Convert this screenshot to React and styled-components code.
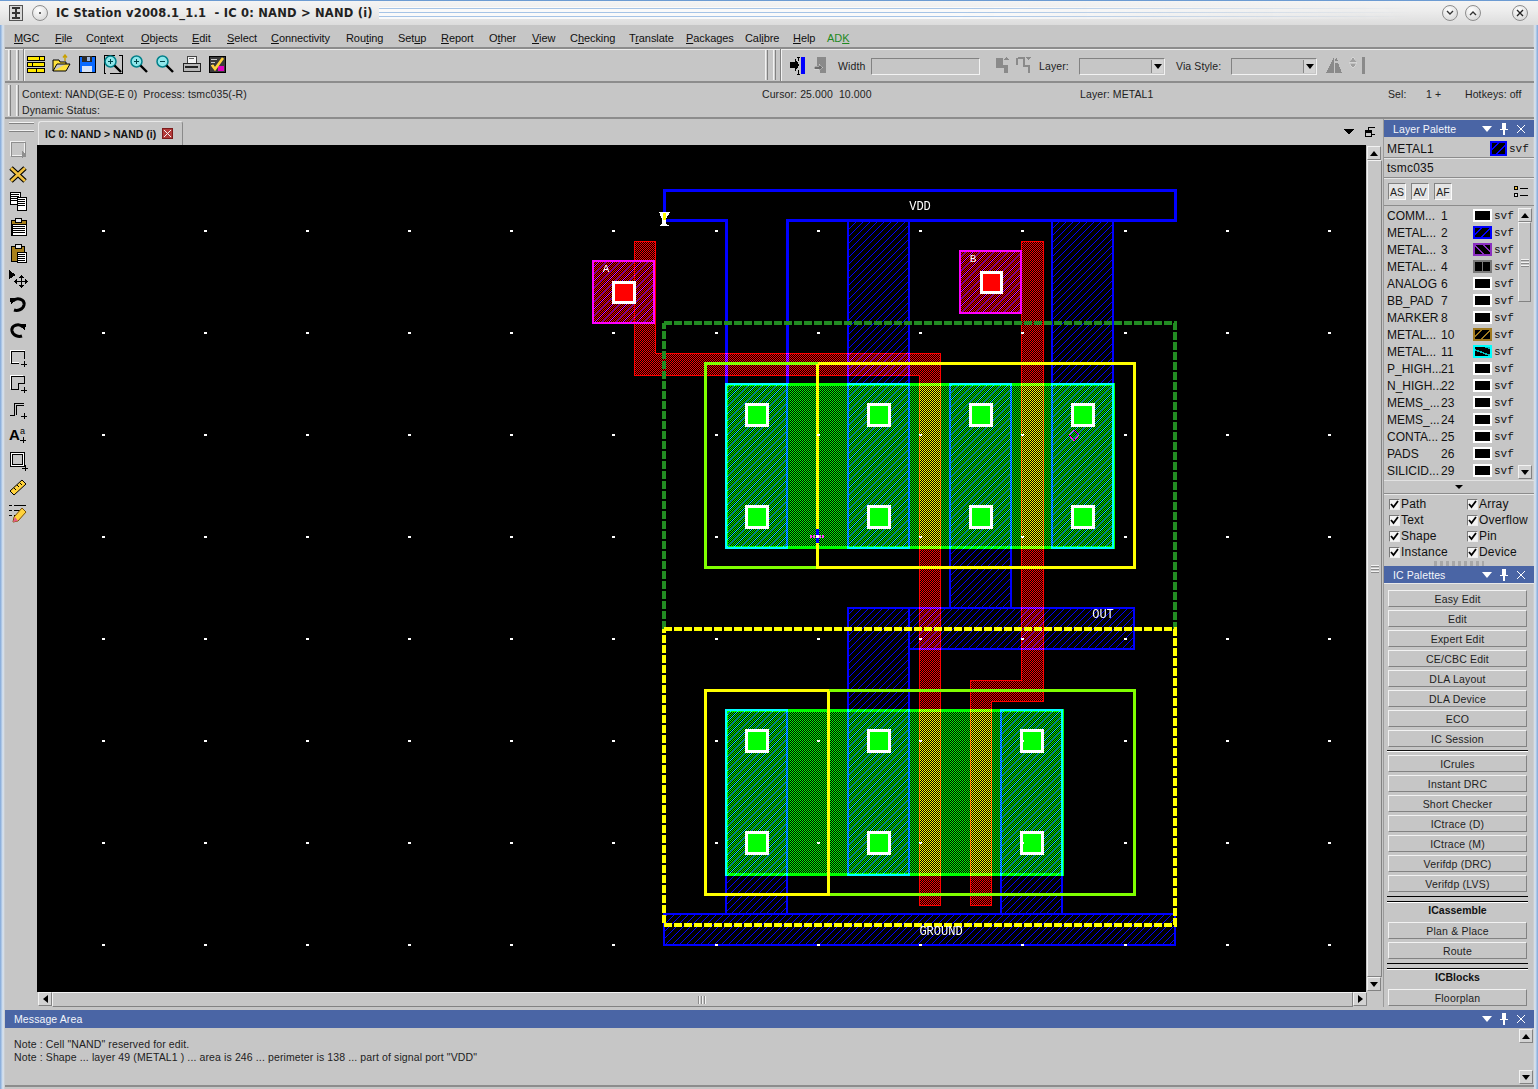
import React from "react";
import styled, { createGlobalStyle } from "styled-components";

const GlobalStyle = createGlobalStyle`
  html, body { margin: 0; padding: 0; background: #c6c6c6; }
  body { width: 1538px; height: 1089px; overflow: hidden; }
`;

const GRAY = "#c6c6c6";
const TITLE_BLUE = "#4a65a5";
const LIGHT = "#f2f2f2";
const DARK = "#828282";
const UI_FONT = `"Liberation Sans", Arial, sans-serif`;

/* ---------- window shell ---------- */

const Window = styled.div`
  width: 1538px;
  height: 1089px;
  box-sizing: border-box;
  background: linear-gradient(90deg, #7ea6d8 0, #dbe6f2 3px, ${GRAY} 5px, ${GRAY} 1533px, #dbe6f2 1535px, #7ea6d8 1538px);
  display: flex;
  flex-direction: column;
  font-family: ${UI_FONT};
  font-size: 11px;
  color: #111;
  overflow: hidden;
`;

const TitleBar = styled.div`
  height: 25px;
  box-sizing: border-box;
  border-top: 1px solid #6c9bd2;
  background: linear-gradient(#f4f4f4, #ededed 40%, #dcdcdc);
  display: flex;
  align-items: center;
  padding: 0 10px 0 9px;
`;

const TitleText = styled.div`
  font-family: "DejaVu Sans", sans-serif;
  font-weight: 700;
  font-size: 11.5px;
  letter-spacing: 0.2px;
  white-space: pre;
  color: #222;
  margin-left: 8px;
`;

const TitleStripes = styled.div`
  flex: 1;
  height: 12px;
  margin: 0 30px 0 6px;
  background: repeating-linear-gradient(#fafafa 0, #fafafa 1px, #a6c4e6 1px, #a6c4e6 2px, #fafafa 2px, #fafafa 4px);
  -webkit-mask-image: linear-gradient(90deg, #000 55%, transparent 100%);
  mask-image: linear-gradient(90deg, #000 55%, transparent 100%);
`;

const WinButton = styled.div`
  width: 16px;
  height: 16px;
  box-sizing: border-box;
  border-radius: 50%;
  border: 1px solid #8d8d8d;
  background: radial-gradient(circle at 40% 30%, #fff, #d0d0d0);
  margin-left: ${(p) => p.$gap || 0}px;
  display: flex;
  align-items: center;
  justify-content: center;
`;

const Glyph = styled.svg`
  display: block;
  flex: none;
  shape-rendering: crispEdges;
  margin-left: ${(p) => p.$ml || 0};
`;

const MenuBar = styled.div`
  height: 24px;
  box-sizing: border-box;
  margin: 0 4px 0 5px;
  padding: 3px 0 0 9px;
  display: flex;
  align-items: center;
  border-bottom: 2px solid #8c8c8c;
  box-shadow: 0 1px 0 #ececec;
`;

const MenuItem = styled.div`
  width: ${(p) => p.$w}px;
  flex: none;
  white-space: pre;
  color: ${(p) => (p.$green ? "#1f8a1f" : "#111")};
  letter-spacing: -0.08px;
`;

const ToolBar = styled.div`
  height: 34px;
  box-sizing: border-box;
  margin: 0 4px 0 5px;
  display: flex;
  align-items: center;
  border-bottom: 2px solid #8c8c8c;
`;

const Grip = styled.div`
  width: 12px;
  height: ${(p) => p.$h}px;
  flex: none;
  margin-left: ${(p) => p.$ml ?? 3}px;
  background: linear-gradient(90deg, ${LIGHT} 0 1px, #d0d0d0 1px 2px, ${DARK} 2px 3px, ${GRAY} 3px 8px, ${LIGHT} 8px 9px, #d0d0d0 9px 10px, ${DARK} 10px 11px, ${GRAY} 11px);
`;

const ToolDivider = styled.div`
  width: 2px;
  height: 100%;
  flex: none;
  margin: 0 ${(p) => p.$right || 0}px 0 3px;
  background: linear-gradient(90deg, ${DARK} 0 1px, ${LIGHT} 1px);
`;

const IconStrip = styled.div`
  width: ${(p) => p.$w}px;
  flex: none;
  display: flex;
  align-items: center;
  gap: 6px;
  margin-top: -3px;
`;

const ToolGap = styled.div`
  width: ${(p) => p.$w}px;
  flex: none;
`;

const SmallLabel = styled.div`
  flex: none;
  width: ${(p) => p.$w}px;
  margin-top: 2px;
  white-space: nowrap;
  font-size: 10.5px;
  color: #222;
  letter-spacing: 0.1px;
`;

const Field = styled.div`
  flex: none;
  box-sizing: border-box;
  width: ${(p) => p.$w}px;
  height: 17px;
  margin: 2px ${(p) => p.$mr || 0}px 0 0;
  border: 1px solid;
  border-color: ${DARK} ${LIGHT} ${LIGHT} ${DARK};
  position: relative;
  background: ${GRAY};
`;

const ComboArrow = styled.div`
  position: absolute;
  right: 1px;
  top: 1px;
  bottom: 1px;
  width: 11px;
  background: #d4d4d4;
  border-left: 1px solid #888;
  display: flex;
  align-items: center;
  justify-content: center;
  &::after {
    content: "";
    border: 4px solid transparent;
    border-top: 5px solid #000;
    border-bottom: 0;
  }
`;

const StatusBar = styled.div`
  height: 36px;
  box-sizing: border-box;
  margin: 0 4px 0 5px;
  display: flex;
  align-items: center;
  border-bottom: 2px solid #8c8c8c;
`;

const StatusLines = styled.div`
  flex: 1;
  margin: 4px 0 0 2px;
  display: grid;
  grid-template-columns: 740px 318px 308px 38px 39px 1fr;
  grid-auto-rows: 16px;
  align-items: center;
  color: #222;
  font-size: 10.5px;
  letter-spacing: 0.1px;
  white-space: pre;
`;

/* ---------- main row ---------- */

const MainRow = styled.div`
  height: 888px;
  flex: none;
  margin: 0 4px 0 5px;
  display: flex;
`;

const LeftTools = styled.div`
  width: 32px;
  flex: none;
  display: flex;
  flex-direction: column;
  align-items: center;
`;

const LeftGrip = styled.div`
  width: 25px;
  height: 11px;
  margin: 3px 0 6px;
  flex: none;
  background: linear-gradient(${LIGHT} 0 1px, ${DARK} 1px 2px, ${GRAY} 2px 8px, ${LIGHT} 8px 9px, ${DARK} 9px 10px, ${GRAY} 10px);
`;

const LeftIcons = styled.div`
  display: flex;
  flex-direction: column;
  gap: 6px;
  margin-left: -7px;
`;

const Center = styled.div`
  width: 1347px;
  flex: none;
  display: flex;
  flex-direction: column;
  border-right: 1px solid #9a9a9a;
  box-sizing: border-box;
`;

const TabRow = styled.div`
  height: 26px;
  flex: none;
  display: flex;
  align-items: flex-end;
  padding-left: 1px;
`;

const Tab = styled.div`
  height: 24px;
  width: 145px;
  box-sizing: border-box;
  border: 1px solid #e8e8e8;
  border-right-color: #8a8a8a;
  border-bottom: 0;
  border-radius: 3px 3px 0 0;
  display: flex;
  align-items: center;
  padding-left: 6px;
  gap: 6px;
  font-weight: 700;
  font-size: 10.5px;
  white-space: nowrap;
`;

const TabClose = styled.div`
  width: 11px;
  height: 11px;
  background: #b23a3a;
  border: 1px solid #7b1b1b;
  box-sizing: border-box;
  display: flex;
  align-items: center;
  justify-content: center;
`;

const TabTools = styled.div`
  margin-left: auto;
  height: 100%;
  display: flex;
  align-items: center;
  gap: 11px;
  padding: 2px 8px 0 0;
`;

const CanvasRow = styled.div`
  display: flex;
  height: 847px;
  flex: none;
`;

const VScroll = styled.div`
  width: ${(p) => p.$w || 16}px;
  flex: none;
  box-sizing: border-box;
  padding: 1px;
  display: flex;
  flex-direction: column;
`;

const HScrollRow = styled.div`
  height: 15px;
  flex: none;
  display: flex;
  padding: 0 16px 0 1px;
`;

const ScrollButton = styled.div`
  flex: none;
  width: 14px;
  height: 14px;
  box-sizing: border-box;
  border: 1px solid;
  border-color: ${LIGHT} ${DARK} ${DARK} ${LIGHT};
  background: #d2d2d2;
  display: flex;
  align-items: center;
  justify-content: center;
  &::after {
    content: "";
    width: 0;
    height: 0;
    border: 4px solid transparent;
    ${(p) => p.$dir === "up" && "border-bottom: 5px solid #000; border-top: 0;"}
    ${(p) => p.$dir === "down" && "border-top: 5px solid #000; border-bottom: 0;"}
    ${(p) => p.$dir === "left" && "border-right: 5px solid #000; border-left: 0;"}
    ${(p) => p.$dir === "right" && "border-left: 5px solid #000; border-right: 0;"}
  }
`;

const ScrollThumb = styled.div`
  box-sizing: border-box;
  flex: ${(p) => (p.$h ? "none" : 1)};
  height: ${(p) => (p.$h ? `${p.$h}px` : "auto")};
  border: 1px solid;
  border-color: ${LIGHT} ${DARK} ${DARK} ${LIGHT};
  display: flex;
  align-items: center;
  justify-content: center;
`;

const ThumbLines = styled.div`
  width: ${(p) => (p.$vertical ? 8 : 9)}px;
  height: ${(p) => (p.$vertical ? 9 : 8)}px;
  background: repeating-linear-gradient(
    ${(p) => (p.$vertical ? "0deg" : "90deg")},
    #8a8a8a 0 1px,
    ${LIGHT} 1px 2px,
    ${GRAY} 2px 3px
  );
`;

const ScrollSpace = styled.div`
  flex: 1;
`;

/* ---------- dock ---------- */

const Dock = styled.div`
  width: 150px;
  flex: none;
  display: flex;
  flex-direction: column;
`;

const PanelHeader = styled.div`
  height: ${(p) => p.$h || 17}px;
  margin-top: ${(p) => p.$mt || 0}px;
  flex: none;
  background: ${TITLE_BLUE};
  color: #f4f6fb;
  font-size: 10.5px;
  letter-spacing: 0.1px;
  display: flex;
  align-items: center;
  padding: 0 8px 0 9px;
`;

const HeaderTools = styled.div`
  margin-left: auto;
  display: flex;
  align-items: center;
  gap: 7px;
`;

const InfoRow = styled.div`
  height: ${(p) => p.$h}px;
  flex: none;
  box-sizing: border-box;
  display: flex;
  align-items: center;
  padding: ${(p) => p.$pt || 0}px 3px 0;
  font-size: 12px;
  letter-spacing: 0.2px;
  border-bottom: 1px solid #8c8c8c;
  box-shadow: 0 1px 0 #e6e6e6;
`;

const Svf = styled.span`
  font-family: "Liberation Mono", monospace;
  font-size: 11px;
  margin-left: 2px;
  width: 20px;
  flex: none;
  letter-spacing: 0;
`;

const Swatch = styled.div`
  width: ${(p) => p.$w || 19}px;
  height: ${(p) => p.$h || 13}px;
  flex: none;
  box-sizing: border-box;
  border: 2px solid ${(p) => p.$color || "#fff"};
  background-color: #000;
  background-image: ${(p) =>
    p.$line
      ? `repeating-linear-gradient(${p.$angle ?? -45}deg, transparent 0 5px, ${p.$line} 5px 6.5px)`
      : p.$split
      ? `linear-gradient(90deg, transparent 0 7px, ${p.$color} 7px 8px, transparent 8px)`
      : "none"};
  margin-left: ${(p) => p.$ml || 0}px;
`;

const ShortButton = styled.div`
  width: 18px;
  height: 17px;
  box-sizing: border-box;
  border: 1px solid;
  border-color: ${DARK} #fafafa #fafafa ${DARK};
  background: #e4e4e4;
  font-size: 10.5px;
  color: #222;
  display: flex;
  align-items: center;
  justify-content: center;
`;

const ButtonsRow = styled.div`
  height: 28px;
  flex: none;
  box-sizing: border-box;
  display: flex;
  align-items: center;
  gap: 5px;
  padding: 0 4px 0 4px;
  border-bottom: 1px solid #8c8c8c;
`;

const LayerSection = styled.div`
  height: 274px;
  flex: none;
  display: flex;
  padding-top: 1px;
  box-sizing: border-box;
`;

const LayerList = styled.div`
  width: 133px;
  flex: none;
`;

const LayerRow = styled.div`
  height: 17px;
  display: flex;
  align-items: center;
  padding-left: 3px;
  font-size: 12px;
  white-space: nowrap;
`;

const LayerName = styled.span`
  width: 54px;
  flex: none;
  letter-spacing: 0;
`;

const LayerNum = styled.span`
  width: 32px;
  flex: none;
`;

const MoreRow = styled.div`
  height: 12px;
  flex: none;
  border-top: 1px solid #e2e2e2;
  border-bottom: 1px solid #8c8c8c;
  display: flex;
  justify-content: center;
  align-items: center;
  &::after {
    content: "";
    border: 4px solid transparent;
    border-top: 4px solid #000;
    border-bottom: 0;
  }
`;

const CheckGrid = styled.div`
  height: 67px;
  flex: none;
  box-sizing: border-box;
  display: grid;
  grid-template-columns: 78px 1fr;
  grid-auto-rows: 16px;
  align-items: center;
  padding: 1px 0 0 5px;
  border-top: 1px solid #e8e8e8;
`;

const CheckItem = styled.div`
  display: flex;
  align-items: center;
  font-size: 12px;
  letter-spacing: 0.2px;
  white-space: nowrap;
`;

const CheckBox = styled.div`
  width: 9px;
  height: 9px;
  margin-right: 1px;
  box-sizing: content-box;
  background: #f4f4f4;
  border: 1px solid;
  border-color: #7a7a7a #eee #eee #7a7a7a;
  display: flex;
  align-items: center;
  justify-content: center;
`;

const DockGrip = styled.div`
  height: 5px;
  flex: none;
  margin: 0 50px;
  background: repeating-linear-gradient(90deg, #9a9a9a 0 3px, ${GRAY} 3px 6px);
  opacity: 0.7;
`;

const ButtonPanel = styled.div`
  flex: 1;
  min-height: 0;
  overflow: hidden;
  display: flex;
  flex-direction: column;
  padding: 6px 7px 0 4px;
  border-top: 1px solid #e8e8e8;
`;

const PaletteButton = styled.div`
  height: 17px;
  flex: none;
  margin-bottom: 3px;
  box-sizing: border-box;
  border: 1px solid;
  border-color: ${LIGHT} ${DARK} ${DARK} ${LIGHT};
  display: flex;
  align-items: center;
  justify-content: center;
  font-size: 10.5px;
  letter-spacing: 0.2px;
  color: #222;
`;

const ThinRule = styled.div`
  height: 2px;
  flex: none;
  margin: 0 -1px 3px;
  background: linear-gradient(#111 0 1px, #fff 1px);
`;

const DoubleRule = styled.div`
  height: 7px;
  flex: none;
  margin: 1px -1px 0;
  background: linear-gradient(#000 0 1px, ${GRAY} 1px 5px, #000 5px 6px, #fff 6px);
`;

const PaletteGroup = styled.div`
  height: 14px;
  flex: none;
  font-weight: 700;
  font-size: 10.5px;
  text-align: center;
  line-height: 14px;
  margin-bottom: 5px;
`;

/* ---------- message area ---------- */

const MessageArea = styled.div`
  height: 75px;
  margin: 3px 4px 0 5px;
  flex: none;
  display: flex;
  flex-direction: column;
  border-bottom: 2px solid #8c8c8c;
`;

const MessageBody = styled.div`
  flex: 1;
  display: flex;
  min-height: 0;
`;

const MessageText = styled.div`
  flex: 1;
  padding: 10px 0 0 9px;
  font-size: 10.5px;
  line-height: 13px;
  letter-spacing: 0.12px;
  color: #222;
  white-space: pre;
`;

/* ---------- layout canvas ---------- */

const CanvasSvg = styled.svg`
  display: block;
  flex: none;
  width: 1329px;
  height: 847px;
  background: #000;
  isolation: isolate;
  shape-rendering: crispEdges;
`;

const ScreenLayer = styled.g`
  mix-blend-mode: screen;
`;

const MetalRect = styled.rect`
  fill: url(#hatchBlue);
  stroke: #0000ff;
  stroke-width: 2;
`;

const MetalLine = styled.path`
  fill: none;
  stroke: #0000ff;
  stroke-width: 3;
`;

const PolyShape = styled.path`
  fill: url(#ditherRed);
  stroke: #ff0000;
  stroke-width: 1;
`;

const ActiveRect = styled.rect`
  fill: url(#ditherGreen);
  stroke: #00ff00;
  stroke-width: 3;
`;

const BoxLine = styled.path`
  fill: none;
  stroke: ${(p) => p.$color};
  stroke-width: 3;
`;

const DashedBox = styled.path`
  fill: none;
  stroke: ${(p) => p.$color};
  stroke-width: 4;
  stroke-dasharray: 8 2;
`;

const ContactRect = styled.rect`
  fill: ${(p) => p.$fill};
  stroke: #fff;
  stroke-width: 3;
`;

const CellLabel = styled.text`
  font-family: "Liberation Mono", monospace;
  font-size: ${(p) => p.$size || 12}px;
  fill: #fff;
  text-anchor: middle;
  shape-rendering: auto;
`;

const GRID_X = [103, 205, 307, 409, 511, 613, 716, 818, 920, 1022, 1125, 1227, 1329];
const GRID_Y = [231, 333, 435, 537, 639, 741, 843, 945];

const METAL_RECTS = [
  [848, 221, 61, 163],
  [1052, 221, 61, 163],
  [726, 384, 61, 164],
  [848, 384, 61, 164],
  [950, 384, 61, 224],
  [1052, 384, 61, 164],
  [909, 608, 225, 41],
  [848, 608, 61, 267],
  [726, 710, 61, 204],
  [1001, 710, 61, 204],
  [664, 914, 511, 31],
  [593, 261, 61, 62],
  [960, 251, 61, 62],
];

const UPPER_CONTACTS = [757, 879, 981, 1083].flatMap((x) => [415, 517].map((y) => [x, y]));
const LOWER_CONTACTS = [757, 879, 1032].flatMap((x) => [741, 843].map((y) => [x, y]));

/* 8x8 checkerboard tile, one pixel squares */
const CHECKER = Array.from({ length: 64 }, (_, i) => [i % 8, Math.floor(i / 8)])
  .filter(([x, y]) => (x + y) % 2 === 0)
  .map(([x, y]) => `M${x} ${y}h1v1h-1z`)
  .join("");

function LayoutCanvas() {
  return (
    <CanvasSvg viewBox="37 145 1329 847">
      <defs>
        <pattern id="hatchBlue" patternUnits="userSpaceOnUse" width="7" height="7">
          {[0, 1, 2, 3, 4, 5, 6].map((i) => (
            <rect key={i} x={i} y={6 - i} width="1" height="1" fill="#0000ff" />
          ))}
        </pattern>
        <pattern id="ditherRed" patternUnits="userSpaceOnUse" width="8" height="8">
          <path d={CHECKER} fill="#ff0000" />
        </pattern>
        <pattern id="ditherGreen" patternUnits="userSpaceOnUse" width="8" height="8">
          <path d={CHECKER} fill="#00ff00" />
        </pattern>
      </defs>

      <ScreenLayer>
        <MetalLine d="M664.5 221.5V190.5H1175.5V220.5H787.5V384" />
        <MetalLine d="M664.5 220.5H726.5V384" />
        {METAL_RECTS.map(([x, y, w, h]) => (
          <MetalRect key={`${x}-${y}`} x={x} y={y} width={w} height={h} />
        ))}
      </ScreenLayer>

      <ScreenLayer>
        <PolyShape d="M634.5 241.5H655.5V353.5H940.5V905.5H919.5V375.5H634.5Z" />
        <PolyShape d="M1021.5 241.5H1043.5V701.5H991.5V905.5H970.5V680.5H1021.5Z" />
        <rect x="592" y="260" width="63" height="64" fill="url(#ditherRed)" />
        <rect x="959" y="250" width="62" height="64" fill="url(#ditherRed)" />
        <rect x="593" y="261" width="61" height="62" fill="none" stroke="#ff0000" strokeWidth="2" />
        <rect x="960" y="251" width="61" height="62" fill="none" stroke="#ff0000" strokeWidth="2" />
      </ScreenLayer>

      <ScreenLayer>
        <ActiveRect x="726.5" y="384.5" width="387" height="163" />
        <ActiveRect x="726.5" y="710.5" width="336" height="164" />
      </ScreenLayer>

      <BoxLine $color="#80ff00" d="M817.5 363.5H705.5V567.5H817.5" />
      <BoxLine $color="#ffff00" d="M817.5 363.5H1134.5V567.5H817.5V363.5" />
      <BoxLine $color="#80ff00" d="M828.5 690.5H1134.5V894.5H828.5" />
      <BoxLine $color="#ffff00" d="M828.5 690.5H705.5V894.5H828.5V690.5" />

      <DashedBox $color="#228b22" d="M664 323H1175V629M664 629V323" />
      <DashedBox $color="#ffff00" d="M664 629H1175V925H664V629" />

      <ContactRect $fill="#ff0000" x="613.5" y="282.5" width="21" height="20" />
      <ContactRect $fill="#ff0000" x="981.5" y="272.5" width="20" height="20" />
      {UPPER_CONTACTS.concat(LOWER_CONTACTS).map(([x, y]) => (
        <ContactRect key={`${x}-${y}`} $fill="#00ff00" x={x - 10.5} y={y - 10.5} width="21" height="21" />
      ))}

      {GRID_Y.flatMap((y) =>
        GRID_X.map((x) => <rect key={`${x}:${y}`} x={x - 1} y={y - 1} width="3" height="2" fill="#fff" />)
      )}

      <polygon points="1074,430 1079,435 1074,441 1069,435" fill="none" stroke="#ff00ff" />
      <rect x="816" y="529" width="3" height="14" fill="#0000ff" />
      <path d="M810 536.5H825" stroke="#ff40ff" strokeWidth="3" strokeDasharray="2 1" />
      <rect x="816" y="535" width="3" height="3" fill="#fff" />
      <path d="M659 212H670L666 219V224L670 226H659L662 224V219Z" fill="#fff" />
      <rect x="663" y="213" width="3" height="7" fill="#ffff00" />

      <CellLabel x="920" y="210">VDD</CellLabel>
      <CellLabel x="1103" y="618">OUT</CellLabel>
      <CellLabel x="941" y="935">GROUND</CellLabel>
      <CellLabel $size={11} x="606" y="272">A</CellLabel>
      <CellLabel $size={11} x="973" y="262">B</CellLabel>
    </CanvasSvg>
  );
}

/* ---------- toolbar icons ---------- */

const I = ({ w = 20, h = 20, children }) => (
  <Glyph width={w} height={h} viewBox={`0 0 ${w} ${h}`}>
    {children}
  </Glyph>
);

const Magnifier = ({ sign }) => (
  <I>
    <circle cx="7.5" cy="7.5" r="5.5" fill="#8fe6ea" stroke="#00808a" strokeWidth="1.5" shapeRendering="auto" />
    <path d="M11.5 11.5L18 18" stroke="#000" strokeWidth="2.4" shapeRendering="auto" />
    <rect x="5" y="7" width="5" height="1.4" fill="#00464a" />
    {sign === "+" && <rect x="6.8" y="5" width="1.4" height="5" fill="#00464a" />}
  </I>
);

const TOP_ICONS = [
  <I key="layers">
    <rect x="2" y="2" width="17" height="4" fill="#ffe800" stroke="#000" />
    <rect x="2" y="8" width="17" height="4" fill="#ffe800" stroke="#000" />
    <rect x="2" y="14" width="17" height="4" fill="#ffe800" stroke="#000" />
    <path d="M14 2V6M7 8V12M11 14V18" stroke="#000" />
  </I>,
  <I key="open">
    <path d="M2 17V6H8L9 8H15V10H6L2 17H15L19 10H15" fill="#ffe23c" stroke="#000" shapeRendering="auto" />
    <path d="M14 7V2M12 3.5L14 1L16 3.5" fill="none" stroke="#c8a000" strokeWidth="1.4" shapeRendering="auto" />
  </I>,
  <I key="save">
    <rect x="2" y="2" width="16" height="16" fill="#0a6aff" stroke="#000" />
    <rect x="5" y="2" width="10" height="6" fill="#2a2a2a" />
    <rect x="10" y="3" width="3" height="4" fill="#9fb8e0" />
    <rect x="5" y="12" width="10" height="6" fill="#d8e4f8" />
  </I>,
  <I key="fit">
    <path d="M1 1H19V19H1Z" fill="none" stroke="#000" />
    <rect x="3" y="12" width="4" height="8" fill={GRAY} />
    <rect x="12" y="0" width="4" height="8" fill={GRAY} />
    <circle cx="7.5" cy="7.5" r="5.5" fill="#8fe6ea" stroke="#00808a" strokeWidth="1.5" shapeRendering="auto" />
    <path d="M11.5 11.5L18 18" stroke="#000" strokeWidth="2.4" shapeRendering="auto" />
    <path d="M5 7.5H10M7.5 5V10" stroke="#00464a" />
  </I>,
  <Magnifier key="in" sign="+" />,
  <Magnifier key="out" sign="-" />,
  <I key="print">
    <rect x="6" y="2" width="9" height="7" fill="#f4f4f4" stroke="#444" />
    <rect x="2" y="9" width="17" height="8" fill="#b8b8b8" stroke="#222" />
    <rect x="4" y="12" width="13" height="2" fill="#222" />
    <rect x="8" y="4" width="5" height="1" fill="#666" />
  </I>,
  <I key="check">
    <rect x="2" y="2" width="16" height="16" fill="#3a3a3a" stroke="#000" />
    <path d="M4 5H10M4 8H8M4 11H7" stroke="#c8c8c8" />
    <rect x="11" y="12" width="6" height="5" fill="#e000c0" />
    <path d="M5 11L8 15L16 4" fill="none" stroke="#ffd23c" strokeWidth="2.6" shapeRendering="auto" />
  </I>,
];

const PlusMark = ({ x = 13, y = 14 }) => <path d={`M${x} ${y + 3}H${x + 6}M${x + 3} ${y}V${y + 6}`} stroke="#000" />;

const Doc = ({ x, y, w = 9, h = 11 }) => (
  <g>
    <rect x={x} y={y} width={w} height={h} fill="#fff" stroke="#000" />
    {[2, 4, 6, 8].map((d) => (
      <path key={d} d={`M${x + 1} ${y + d}H${x + w - 1}`} stroke="#000" />
    ))}
  </g>
);

const LEFT_ICONS = [
  <I key="sel">
    <rect x="2" y="2" width="14" height="14" fill="none" stroke="#f0f0f0" />
    <rect x="3" y="3" width="14" height="14" fill="none" stroke="#8e8e8e" />
    <path d="M14 12L19 16L14 19Z" fill="#8e8e8e" />
  </I>,
  <I key="del">
    <path d="M3 3L17 16M17 3L3 16" stroke="#000" strokeWidth="5" shapeRendering="auto" />
    <path d="M3 3L17 16M17 3L3 16" stroke="#f0c040" strokeWidth="2.6" shapeRendering="auto" />
  </I>,
  <I key="copy">
    <Doc x={2} y={1} w={10} h={12} />
    <Doc x={9} y={6} w={9} h={13} />
  </I>,
  <I key="clip">
    <rect x="3" y="3" width="15" height="15" fill="#a8801c" stroke="#000" />
    <rect x="7" y="1" width="6" height="4" fill="#e8e8e8" stroke="#000" />
    <Doc x={4} y={7} w={14} h={11} />
  </I>,
  <I key="paste">
    <rect x="3" y="3" width="13" height="15" fill="#a8801c" stroke="#000" />
    <rect x="7" y="1" width="6" height="4" fill="#e8e8e8" stroke="#000" />
    <Doc x={9} y={9} w={9} h={10} />
  </I>,
  <I key="move">
    <path d="M1 1L8 6L1 10Z" fill="#000" />
    <path d="M13 6L10 9H16ZM13 19L10 16H16ZM6 12.5L9 10V15ZM20 12.5L17 10V15Z" fill="#000" />
    <path d="M9 12.5H17M13 9V16" stroke="#000" />
  </I>,
  <I key="undo">
    <path d="M5 6C9 2 17 4 16 10C15 15 9 16 6 15" fill="none" stroke="#000" strokeWidth="3" shapeRendering="auto" />
    <path d="M2 3L9 3L3 10Z" fill="#000" />
  </I>,
  <I key="redo">
    <path d="M15 6C11 2 3 4 4 10C5 15 11 16 14 15" fill="none" stroke="#000" strokeWidth="3" shapeRendering="auto" />
    <path d="M18 3L11 3L17 10Z" fill="#000" />
  </I>,
  <I key="rect">
    <rect x="2" y="3" width="14" height="12" fill="none" stroke="#fff" />
    <rect x="3" y="4" width="13" height="12" fill="none" stroke="#000" />
    <rect x="11" y="12" width="9" height="8" fill={GRAY} />
    <PlusMark />
  </I>,
  <I key="poly">
    <path d="M3 16V3H16V10H10V16Z" fill="none" stroke="#000" />
    <path d="M2 16V2H15" fill="none" stroke="#fff" />
    <PlusMark />
  </I>,
  <I key="path">
    <path d="M2 16H6V4H16M8 16V6H16" fill="none" stroke="#000" />
    <PlusMark />
  </I>,
  <I key="text">
    <text x="1" y="15" fontFamily="Liberation Sans" fontWeight="700" fontSize="15" fill="#000">A</text>
    <text x="12" y="9" fontFamily="Liberation Sans" fontSize="9" fill="#000">a</text>
    <PlusMark x={12} y={12} />
  </I>,
  <I key="inst">
    <rect x="2" y="1" width="14" height="14" fill="#fff" stroke="#000" />
    <rect x="4" y="3" width="10" height="10" fill={GRAY} stroke="#000" />
    <PlusMark x={14} y={14} />
  </I>,
  <I key="ruler">
    <path d="M2 14L14 3L18 7L6 18Z" fill="#ffd23c" stroke="#000" shapeRendering="auto" />
    <path d="M6 11L8 13M9 8L11 10M12 6L14 8" stroke="#000" shapeRendering="auto" />
  </I>,
  <I key="props">
    <path d="M1 2H4M1 7H4M1 12H4M6 2H18M6 7H12M6 12H9" stroke="#000" />
    <path d="M6 14L14 5L18 9L10 18L5 19Z" fill="#ffd23c" stroke="#7a5000" shapeRendering="auto" />
    <path d="M5 19L7 14L10 18Z" fill="#e85a8a" shapeRendering="auto" />
  </I>,
];

const HeaderIcons = () => (
  <HeaderTools>
    <Glyph width="10" height="8" viewBox="0 0 10 8">
      <path d="M0 1H10L5 7Z" fill="#fff" shapeRendering="auto" />
    </Glyph>
    <Glyph width="10" height="12" viewBox="0 0 10 12">
      <path d="M3 0H7V6H9V7H6V12H4V7H1V6H3Z" fill="#fff" />
    </Glyph>
    <Glyph width="10" height="10" viewBox="0 0 10 10">
      <path d="M1 1L9 9M9 1L1 9" stroke="#fff" shapeRendering="auto" />
    </Glyph>
  </HeaderTools>
);

/* ---------- data ---------- */

const MENU = [
  ["", "M", "GC", 41],
  ["", "F", "ile", 31],
  ["Co", "n", "text", 55],
  ["", "O", "bjects", 51],
  ["", "E", "dit", 35],
  ["", "S", "elect", 44],
  ["", "C", "onnectivity", 75],
  ["Rou", "t", "ing", 52],
  ["Set", "u", "p", 43],
  ["", "R", "eport", 48],
  ["O", "t", "her", 43],
  ["", "V", "iew", 38],
  ["C", "h", "ecking", 59],
  ["T", "r", "anslate", 57],
  ["", "P", "ackages", 59],
  ["Cal", "i", "bre", 48],
  ["", "H", "elp", 34],
];

const LAYERS = [
  { name: "COMM...", num: "1" },
  { name: "METAL...", num: "2", color: "#0000ff", line: "#0000ff" },
  { name: "METAL...", num: "3", color: "#8a2fc0", line: "#8a2fc0", angle: 45 },
  { name: "METAL...", num: "4", color: "#7a7a7a", split: true },
  { name: "ANALOG", num: "6" },
  { name: "BB_PAD", num: "7" },
  { name: "MARKER", num: "8" },
  { name: "METAL...", num: "10", color: "#a07a20", line: "#a07a20" },
  { name: "METAL...", num: "11", color: "#00ffff", line: "#00c0c0", angle: 20 },
  { name: "P_HIGH...", num: "21" },
  { name: "N_HIGH...", num: "22" },
  { name: "MEMS_...", num: "23" },
  { name: "MEMS_...", num: "24" },
  { name: "CONTA...", num: "25" },
  { name: "PADS", num: "26" },
  { name: "SILICID...", num: "29" },
];

const CHECKS = ["Path", "Array", "Text", "Overflow", "Shape", "Pin", "Instance", "Device"];

const EDIT_BUTTONS = ["Easy Edit", "Edit", "Expert Edit", "CE/CBC Edit", "DLA Layout", "DLA Device", "ECO", "IC Session"];
const CHECK_BUTTONS = ["ICrules", "Instant DRC", "Short Checker", "ICtrace (D)", "ICtrace (M)", "Verifdp (DRC)", "Verifdp (LVS)"];

export default function App() {
  return (
    <Window>
      <GlobalStyle />

      <TitleBar>
        <Glyph width="14" height="16" viewBox="0 0 14 16">
          <rect x="0.5" y="0.5" width="13" height="15" fill="#d8d8d8" stroke="#555" />
          <path d="M3 3H11M7 3V13M3 8H11M3 13H11" stroke="#333" strokeWidth="2" />
        </Glyph>
        <WinButton $gap={9}>
          <Glyph width="2" height="2"><rect width="2" height="2" fill="#666" /></Glyph>
        </WinButton>
        <TitleText>IC Station v2008.1_1.1  - IC 0: NAND &gt; NAND (i)</TitleText>
        <TitleStripes />
        <WinButton>
          <Glyph width="8" height="6" viewBox="0 0 8 6"><path d="M1 1L4 4L7 1" fill="none" stroke="#333" strokeWidth="1.4" shapeRendering="auto" /></Glyph>
        </WinButton>
        <WinButton $gap={7}>
          <Glyph width="8" height="6" viewBox="0 0 8 6"><path d="M1 5L4 2L7 5" fill="none" stroke="#333" strokeWidth="1.4" shapeRendering="auto" /></Glyph>
        </WinButton>
        <WinButton $gap={31}>
          <Glyph width="8" height="8" viewBox="0 0 8 8"><path d="M1 1L7 7M7 1L1 7" stroke="#222" strokeWidth="1.4" shapeRendering="auto" /></Glyph>
        </WinButton>
      </TitleBar>

      <MenuBar>
        {MENU.map(([before, key, after, w]) => (
          <MenuItem key={before + key + after} $w={w}>
            {before}<u>{key}</u>{after}
          </MenuItem>
        ))}
        <MenuItem $w={30} $green>AD<u>K</u></MenuItem>
      </MenuBar>

      <ToolBar>
        <Grip $h={30} />
        <ToolDivider />
        <IconStrip $w={214}>{TOP_ICONS}</IconStrip>
        <ToolGap $w={526} />
        <Grip $h={30} $ml={0} />
        <ToolDivider $right={8} />
        <I w={17} h={20}>
          <path d="M0 7H5V3L9 10L5 17V13H0Z" fill="#000" />
          <rect x="11" y="2" width="4" height="17" fill="#0000ff" />
          <path d="M7 2H10M7 19H10M8 2V6M8 15V19" stroke="#000" />
        </I>
        <ToolGap $w={6} />
        <I w={14} h={20}>
          <path d="M4 2H13V18H7V11H4Z" fill="#8a8a8a" />
          <path d="M1 11H6V9L10 12.5L6 16V14H1Z" fill="#6e6e6e" stroke="#ddd" strokeWidth="0.5" />
        </I>
        <ToolGap $w={11} />
        <SmallLabel $w={33}>Width</SmallLabel>
        <Field $w={109} $mr={14} />
        <I w={16} h={20}>
          <path d="M2 3H9V10H14V18H10V13H2Z" fill="#8a8a8a" />
          <path d="M10 5L12.5 2L15 5Z" fill="#8a8a8a" />
        </I>
        <ToolGap $w={6} />
        <I w={15} h={20}>
          <path d="M2 3H8V11H13V18M1 3V10" fill="none" stroke="#8a8a8a" strokeWidth="2" />
          <path d="M9 2H15L12 5Z" fill="#8a8a8a" />
        </I>
        <ToolGap $w={8} />
        <SmallLabel $w={40}>Layer:</SmallLabel>
        <Field $w={86} $mr={11}><ComboArrow /></Field>
        <SmallLabel $w={55}>Via Style:</SmallLabel>
        <Field $w={86} $mr={8}><ComboArrow /></Field>
        <I w={18} h={20}>
          <path d="M9 2V18H1Z M10 8H13L17 18H10Z" fill="#8a8a8a" />
          <path d="M11 2L13 6L10 6Z" fill="#8a8a8a" />
        </I>
        <ToolGap $w={4} />
        <I w={20} h={20}>
          <path d="M6 2L10 7H2ZM6 13L10 8H2Z" fill="#a0a0a0" stroke="#e4e4e4" strokeWidth="0.5" />
          <rect x="15" y="2" width="3" height="17" fill="#8a8a8a" />
        </I>
      </ToolBar>

      <StatusBar>
        <Grip $h={31} />
        <StatusLines>
          <span>Context: NAND(GE-E 0)  Process: tsmc035(-R)</span>
          <span>Cursor: 25.000  10.000</span>
          <span>Layer: METAL1</span>
          <span>Sel:</span>
          <span>1 +</span>
          <span>Hotkeys: off</span>
          <span>Dynamic Status:</span>
        </StatusLines>
      </StatusBar>

      <MainRow>
        <LeftTools>
          <LeftGrip />
          <LeftIcons>{LEFT_ICONS}</LeftIcons>
        </LeftTools>

        <Center>
          <TabRow>
            <Tab>
              IC 0: NAND &gt; NAND (i)
              <TabClose>
                <Glyph width="7" height="7" viewBox="0 0 7 7"><path d="M0 0L7 7M7 0L0 7" stroke="#f4f4f4" shapeRendering="auto" /></Glyph>
              </TabClose>
            </Tab>
            <TabTools>
              <Glyph width="10" height="6" viewBox="0 0 10 6"><path d="M0 0H10L5 6Z" fill="#000" /></Glyph>
              <Glyph width="10" height="10" viewBox="0 0 10 10">
                <rect x="3" y="0" width="7" height="7" fill="none" stroke="#000" strokeWidth="1" />
                <rect x="0" y="3" width="7" height="7" fill="#000" />
                <rect x="1" y="6" width="5" height="3" fill={GRAY} />
              </Glyph>
            </TabTools>
          </TabRow>

          <CanvasRow>
            <LayoutCanvas />
            <VScroll $w={17}>
              <ScrollButton $dir="up" />
              <ScrollThumb><ThumbLines $vertical /></ScrollThumb>
              <ScrollButton $dir="down" />
            </VScroll>
          </CanvasRow>

          <HScrollRow>
            <ScrollButton $dir="left" />
            <ScrollThumb><ThumbLines /></ScrollThumb>
            <ScrollButton $dir="right" />
          </HScrollRow>
        </Center>

        <Dock>
          <PanelHeader $mt={1}>
            Layer Palette
            <HeaderIcons />
          </PanelHeader>
          <InfoRow $h={21} $pt={3}>
            METAL1
            <Swatch $color="#0000ff" $line="#0000ff" $w={17} $h={15} $ml={56} />
            <Svf>svf</Svf>
          </InfoRow>
          <InfoRow $h={20}>tsmc035</InfoRow>
          <ButtonsRow>
            <ShortButton>AS</ShortButton>
            <ShortButton>AV</ShortButton>
            <ShortButton>AF</ShortButton>
            <Glyph $ml="auto" width="16" height="12" viewBox="0 0 16 12">
              <rect x="0.5" y="0.5" width="3" height="3" fill="#f0c040" stroke="#000" />
              <rect x="0.5" y="7.5" width="3" height="3" fill="#ddd" stroke="#000" />
              <path d="M6 2H14M6 9H14" stroke="#000" />
            </Glyph>
          </ButtonsRow>

          <LayerSection>
            <LayerList>
              {LAYERS.map(({ name, num, color, line, angle, split }) => (
                <LayerRow key={name + num}>
                  <LayerName>{name}</LayerName>
                  <LayerNum>{num}</LayerNum>
                  <Swatch $color={color} $line={line} $angle={angle} $split={split} />
                  <Svf>svf</Svf>
                </LayerRow>
              ))}
            </LayerList>
            <VScroll $w={15}>
              <ScrollButton $dir="up" />
              <ScrollThumb $h={80}><ThumbLines $vertical /></ScrollThumb>
              <ScrollSpace />
              <ScrollButton $dir="down" />
            </VScroll>
          </LayerSection>
          <MoreRow />

          <CheckGrid>
            {CHECKS.map((label) => (
              <CheckItem key={label}>
                <CheckBox>
                  <Glyph width="9" height="9" viewBox="0 0 9 9">
                    <path d="M1 4L3.5 7L8 1" fill="none" stroke="#000" strokeWidth="1.8" shapeRendering="auto" />
                  </Glyph>
                </CheckBox>
                {label}
              </CheckItem>
            ))}
          </CheckGrid>
          <DockGrip />

          <PanelHeader>
            IC Palettes
            <HeaderIcons />
          </PanelHeader>
          <ButtonPanel>
            {EDIT_BUTTONS.map((label) => <PaletteButton key={label}>{label}</PaletteButton>)}
            <ThinRule />
            {CHECK_BUTTONS.map((label) => <PaletteButton key={label}>{label}</PaletteButton>)}
            <DoubleRule />
            <PaletteGroup>ICassemble</PaletteGroup>
            <PaletteButton>Plan &amp; Place</PaletteButton>
            <PaletteButton>Route</PaletteButton>
            <DoubleRule />
            <PaletteGroup>ICBlocks</PaletteGroup>
            <PaletteButton>Floorplan</PaletteButton>
          </ButtonPanel>
        </Dock>
      </MainRow>

      <MessageArea>
        <PanelHeader $h={18}>
          Message Area
          <HeaderIcons />
        </PanelHeader>
        <MessageBody>
          <MessageText>
            {`Note : Cell "NAND" reserved for edit.\nNote : Shape ... layer 49 (METAL1 ) ... area is 246 ... perimeter is 138 ... part of signal port "VDD"`}
          </MessageText>
          <VScroll $w={16}>
            <ScrollButton $dir="up" />
            <ScrollSpace />
            <ScrollButton $dir="down" />
          </VScroll>
        </MessageBody>
      </MessageArea>
    </Window>
  );
}
